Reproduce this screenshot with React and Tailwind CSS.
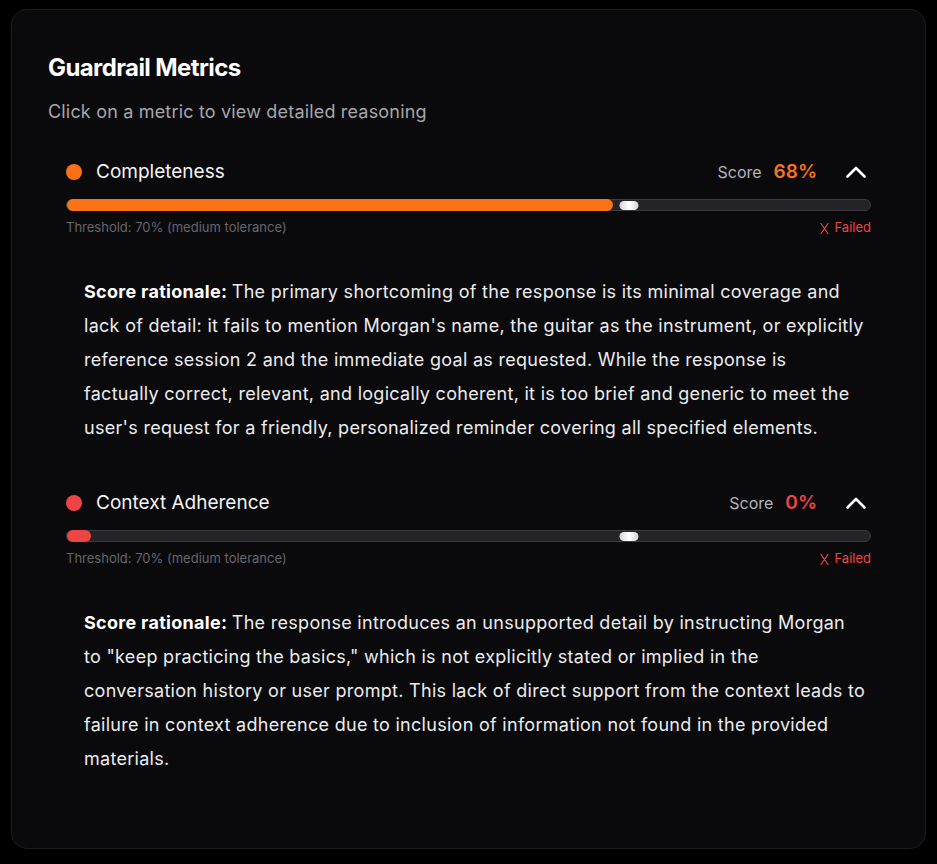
import React from "react";

const metrics = [
  {
    name: "Completeness",
    score: 68,
    color: "bg-[#f97316]",
    text: "text-[#f97316]",
    fillWidth: "68%",
    lines: [
      "The primary shortcoming of the response is its minimal coverage and",
      "lack of detail: it fails to mention Morgan's name, the guitar as the instrument, or explicitly",
      "reference session 2 and the immediate goal as requested. While the response is",
      "factually correct, relevant, and logically coherent, it is too brief and generic to meet the",
      "user's request for a friendly, personalized reminder covering all specified elements.",
    ],
  },
  {
    name: "Context Adherence",
    score: 0,
    color: "bg-[#ef4444]",
    text: "text-[#ef4444]",
    fillWidth: "24px",
    lines: [
      "The response introduces an unsupported detail by instructing Morgan",
      "to \"keep practicing the basics,\" which is not explicitly stated or implied in the",
      "conversation history or user prompt. This lack of direct support from the context leads to",
      "failure in context adherence due to inclusion of information not found in the provided",
      "materials.",
    ],
  },
];

function Chevron() {
  return (
    <svg width="24" height="24" viewBox="0 0 24 24" fill="none" className="mr-[3px]">
      <path d="M3.5 16.5 L12 8 L20.5 16.5" stroke="#ffffff" strokeWidth="2.6" strokeLinecap="round" strokeLinejoin="round" />
    </svg>
  );
}

function XMark() {
  return (
    <svg width="9" height="11" viewBox="0 0 9 11" fill="none" className="mr-[6px]">
      <path d="M1 0.5 Q4.5 5.5 8 10.5 M8 0.5 Q4.5 5.5 1 10.5" stroke="#ef4444" strokeWidth="1.2" strokeLinecap="round" />
    </svg>
  );
}

function Metric({ m, first }) {
  return (
    <div className={first ? "mt-[30px] px-[18px]" : "mt-[42px] px-[18px]"}>
      <div className="flex h-8 items-center justify-between">
        <div className="flex items-center gap-[14px]">
          <span className={`h-4 w-4 rounded-full ${m.color}`} />
          <span className="text-[19px] text-[#f4f4f5]">{m.name}</span>
        </div>
        <div className="flex items-center">
          <span className="text-[16px] text-[#b4b4b9]">Score</span>
          <span className={`ml-3 text-[19px] font-semibold ${m.text}`}>{m.score}%</span>
          <span className="ml-[27px] flex items-center">
            <Chevron />
          </span>
        </div>
      </div>
      <div className="relative mt-[11px] h-3 rounded-full border border-[#3a3a40] bg-[#232328]">
        <div className={`absolute left-0 top-[-1px] h-3 rounded-full ${m.color}`} style={{ width: m.fillWidth }} />
        <div className="absolute left-[70%] top-[1px] h-[9px] w-[19px] -translate-x-1/2 rounded-full bg-gradient-to-r from-[#d4d4d8] via-[#ffffff] to-[#d4d4d8]" />
      </div>
      <div className="mt-[7px] flex h-5 items-center justify-between text-[13px]">
        <span className="text-[#66666d]">Threshold: 70% (medium tolerance)</span>
        <span className="flex items-center text-[#ef4444]">
          <XMark />
          Failed
        </span>
      </div>
      <div className="mt-[37px] px-[18px] text-[18px] leading-[34px] tracking-[0.016em] text-[#ececee]">
        {m.lines.map((line, i) => (
          <div key={i} className="whitespace-nowrap">
            {i === 0 && <span className="font-bold text-white">Score rationale: </span>}
            {line}
          </div>
        ))}
      </div>
    </div>
  );
}

export default function App() {
  return (
    <div className="min-h-[864px] bg-black pt-[9px] pl-[11px] pr-[11px]" style={{ fontFamily: "Inter, 'Noto Sans', sans-serif" }}>
      <div className="h-[840px] rounded-[16px] border border-[#1c1c21] bg-[#0a0a0d] px-9 pt-10">
        <h1 className="text-[24px] font-bold leading-9 tracking-[-0.025em] text-white">Guardrail Metrics</h1>
        <p className="mt-3 text-[18px] leading-7 tracking-[0.01em] text-[#a6a6ab]">Click on a metric to view detailed reasoning</p>
        {metrics.map((m, i) => (
          <Metric key={m.name} m={m} first={i === 0} />
        ))}
      </div>
    </div>
  );
}
